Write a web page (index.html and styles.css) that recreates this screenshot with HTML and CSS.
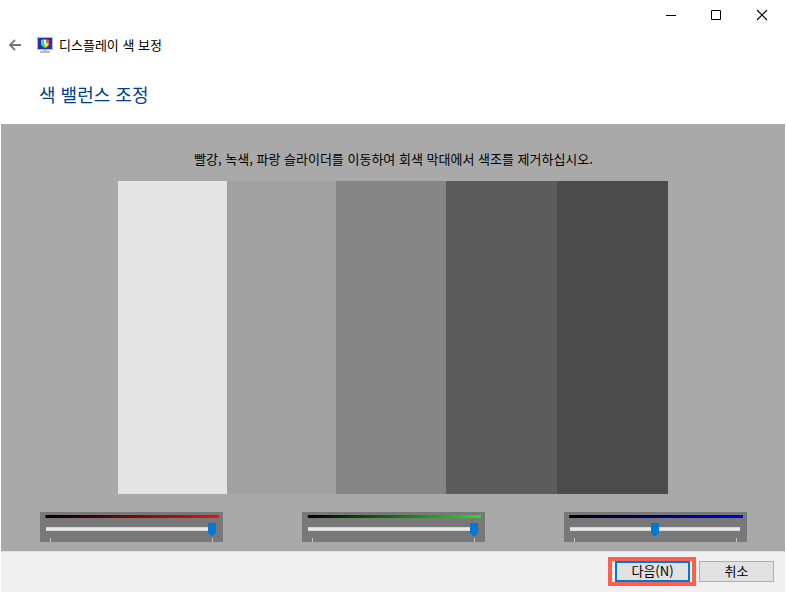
FILE: index.html
```html
<!DOCTYPE html>
<html lang="ko">
<head>
<meta charset="utf-8">
<meta name="viewport" content="width=device-width, initial-scale=1">
<title>디스플레이 색 보정</title>
<link rel="stylesheet" href="styles.css">
</head>
<body>
<div class="window">
  <div class="caption">
    <button class="caption-button" type="button" aria-label="최소화">
      <svg width="12" height="12" viewBox="0 0 12 12"><path d="M2 6.500h10" stroke="#000" fill="none"/></svg>
    </button>
    <button class="caption-button" type="button" aria-label="최대화">
      <svg width="12" height="12" viewBox="0 0 12 12"><path d="M1.500 1.500h9v9h-9z" stroke="#000" fill="none"/></svg>
    </button>
    <button class="caption-button" type="button" aria-label="닫기">
      <svg width="12" height="12" viewBox="0 0 12 12"><path d="M1 1l10 10M11 1L1 11" stroke="#000" stroke-width="1.100" fill="none"/></svg>
    </button>
  </div>
  <header class="title-row">
    <button class="back" type="button" aria-label="뒤로">
      <svg width="14" height="14" viewBox="0 0 14 14"><path d="M13 7H2M7 2L2 7l5 5" stroke="#777" stroke-width="1.800" fill="none"/></svg>
    </button>
    <svg class="app-icon" width="16" height="16" viewBox="0 0 16 16" aria-hidden="true">
      <path d="M0 0h16v13H0z" fill="#b4b9c4"/>
      <path d="M1 1h14v11H1z" fill="#2433b0"/>
      <path d="M4 3l4-1v4L4 8z" fill="#25d6ec"/>
      <path d="M8 2l4 1v4L8 6z" fill="#ef5a4a"/>
      <path d="M4 7l4-2v6L5 9z" fill="#4fe04a"/>
      <path d="M8 5l4 2-1 2-3 2z" fill="#f7e83a"/>
      <path d="M7 3h2v4H7z" fill="#fff"/>
      <path d="M6 13h4v1h3v2H3v-2h3z" fill="#b9bbbe"/>
    </svg>
    <span class="app-title">디스플레이 색 보정</span>
  </header>
  <h1 class="heading">색 밸런스 조정</h1>
  <main class="stage">
    <p class="instruction">빨강, 녹색, 파랑 슬라이더를 이동하여 회색 막대에서 색조를 제거하십시오.</p>
    <div class="bars">
      <div class="bar bar-1"></div>
      <div class="bar bar-2"></div>
      <div class="bar bar-3"></div>
      <div class="bar bar-4"></div>
      <div class="bar bar-5"></div>
    </div>
    <div class="sliders">
      <div class="slider">
        <div class="ramp ramp-red"></div>
        <input class="range" type="range" min="0" max="100" value="100" aria-label="빨강">
        <div class="ticks"></div>
      </div>
      <div class="slider">
        <div class="ramp ramp-green"></div>
        <input class="range" type="range" min="0" max="100" value="100" aria-label="녹색">
        <div class="ticks"></div>
      </div>
      <div class="slider">
        <div class="ramp ramp-blue"></div>
        <input class="range" type="range" min="0" max="100" value="50" aria-label="파랑">
        <div class="ticks"></div>
      </div>
    </div>
  </main>
  <footer class="footer">
    <div class="highlight"><button class="button button-default" type="button">다음(N)</button></div>
    <button class="button" type="button">취소</button>
  </footer>
</div>
</body>
</html>
```
FILE: styles.css
```css
* {
  box-sizing: border-box;
}

body {
  margin: 0;
  background: #fff;
  color: #000;
  font: 13px/16px "Noto Sans CJK KR", "Liberation Sans", sans-serif;
}

button {
  margin: 0;
  padding: 0;
  border: 0;
  background: none;
  color: inherit;
  font: inherit;
}

.window {
  display: flex;
  flex-direction: column;
  min-height: 100vh;
  padding: 0 1px 1px;
}

.caption {
  display: flex;
  justify-content: flex-end;
  height: 30px;
}

.caption-button {
  display: grid;
  place-items: center;
  width: 46px;
}

.title-row {
  display: flex;
  align-items: center;
  height: 30px;
  padding-left: 7px;
}

.back {
  display: flex;
}

.app-icon {
  margin: 0 6px 0 15px;
}

.heading {
  height: 64px;
  margin: 0;
  padding: 22px 38px 0;
  color: #003f8a;
  font-size: 18px;
  font-weight: 400;
  line-height: 24px;
}

.stage {
  display: flex;
  flex: 1;
  flex-direction: column;
  padding: 27px 38px 9px 39px;
  background: #a9a9a9;
}

.instruction {
  margin: 0 0 14px;
  text-align: center;
}

.bars {
  display: grid;
  flex: 1;
  grid-template-columns: 109fr 109fr 110fr 111fr 111fr;
  min-height: 120px;
  margin: 0 79px 18px 78px;
}

.bar-1 { background: #e4e4e4; }
.bar-2 { background: #a1a1a1; }
.bar-3 { background: #858585; }
.bar-4 { background: #5c5c5c; }
.bar-5 { background: #4b4b4b; }

.sliders {
  display: grid;
  grid-template-columns: repeat(3, 1fr);
  gap: 79px;
}

.slider {
  height: 30px;
  padding: 3px 7px 0 6px;
  background: #787878;
}

.ramp {
  height: 3px;
  margin: 0 -3px 0 -1px;
}

.ramp-red { background: linear-gradient(to right, #a01414 1px, #000 1px, #e61414); }
.ramp-green { background: linear-gradient(to right, #14a014 1px, #000 1px, #1ee61e); }
.ramp-blue { background: linear-gradient(to right, #0000b4 1px, #000 1px, #0000e6); }

.range {
  display: block;
  width: 100%;
  height: 14px;
  margin: 4px 0 2px;
  background: none;
  appearance: none;
}

.range::-webkit-slider-runnable-track {
  box-sizing: border-box;
  height: 4px;
  border: solid #d6d6d6;
  border-width: 1px 0;
  background: #e7eaea;
}

.range::-webkit-slider-thumb {
  width: 8px;
  height: 13px;
  margin: -5px 0 0;
  background: #0078d7;
  clip-path: polygon(0 0, 100% 0, 100% 75%, 60% 100%, 40% 100%, 0 75%);
  appearance: none;
}

.ticks {
  height: 4px;
  margin: 0 3px 0 4px;
  border: solid #c4c4c4;
  border-width: 0 1px;
}

.footer {
  display: flex;
  align-items: center;
  justify-content: flex-end;
  gap: 3px;
  height: 41px;
  padding: 0 11px 2px;
  border-top: 1px solid #dfdfdf;
  background: #f0f0f0;
}

.highlight {
  padding: 0 2px 0 3px;
  border: 4px solid #fa5f50;
}

.button {
  display: block;
  width: 75px;
  height: 21px;
  border: 1px solid #adadad;
  background: #e1e1e1;
  line-height: 16px;
}

.button-default {
  border: 2px solid #0078d7;
}
```
